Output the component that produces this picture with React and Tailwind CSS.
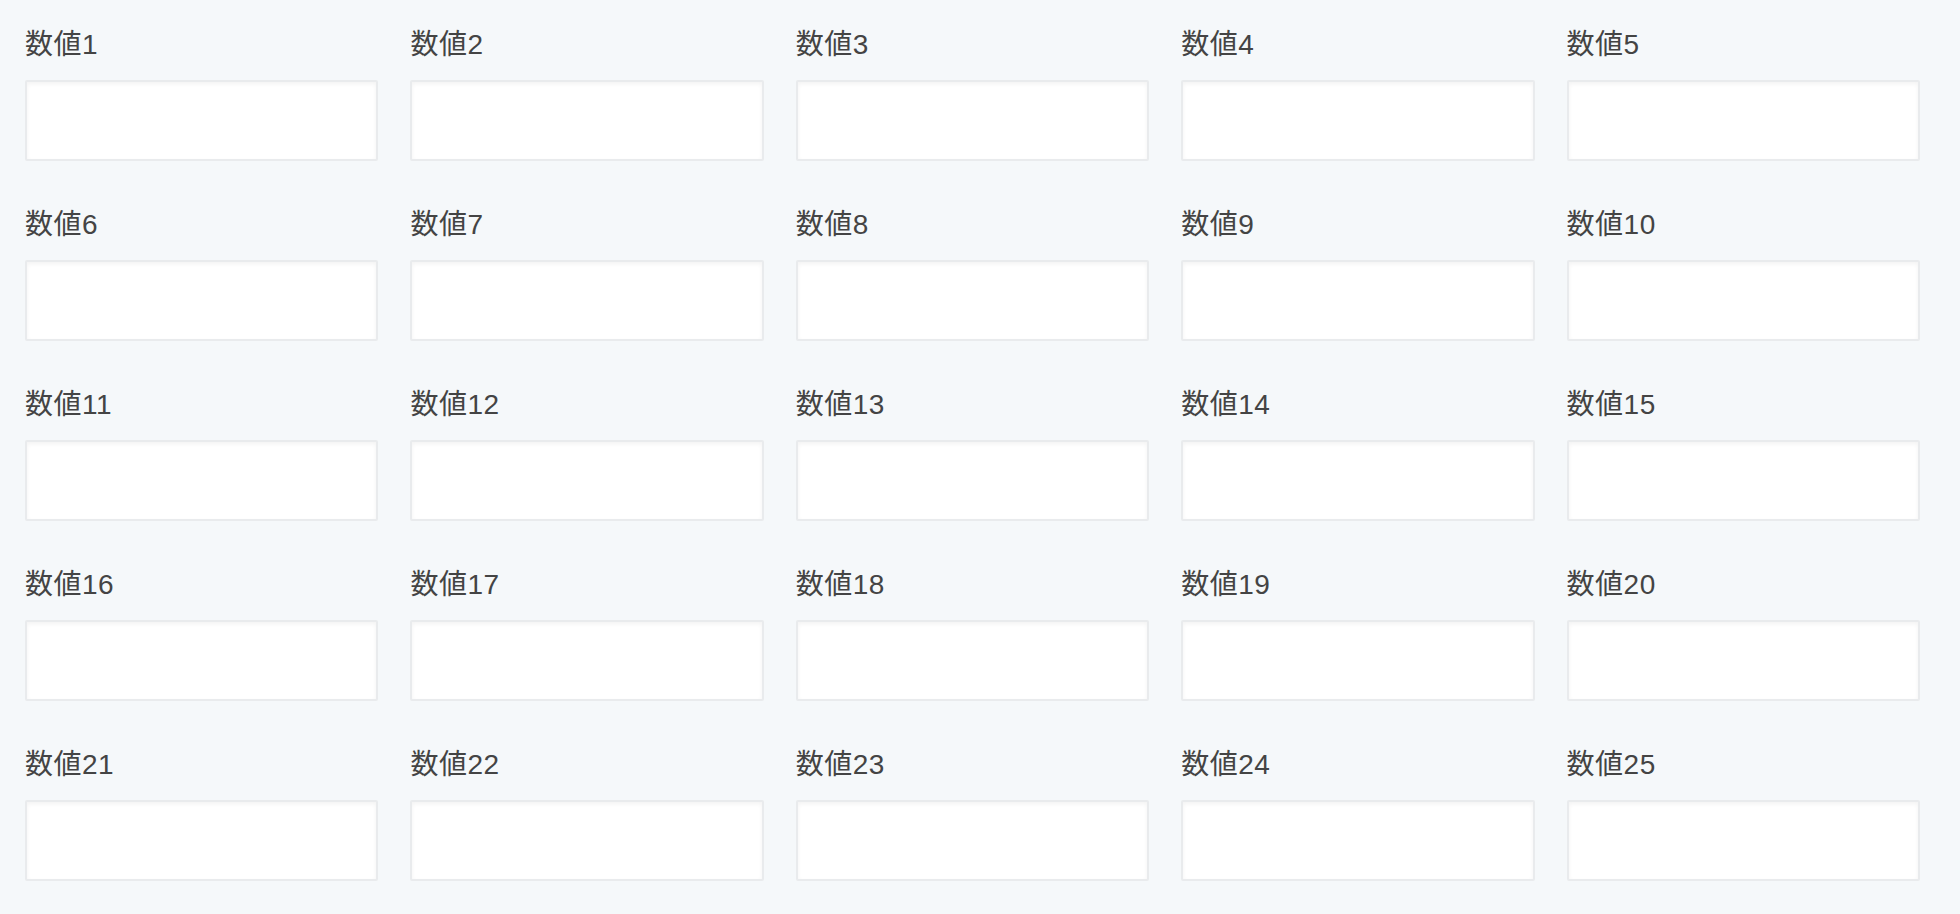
const fields = Array.from({ length: 25 }, (_, i) => ({
  id: `value${i + 1}`,
  label: `数値${i + 1}`,
}));

function NumberField({ id, label }) {
  return (
    <div className="flex flex-col">
      <label
        htmlFor={id}
        className="block h-[36px] text-[28px] leading-[36px] tracking-[0.5px] text-[#444] mt-[3px] mb-[17px]"
      >
        {label}
      </label>
      <input
        id={id}
        type="text"
        inputMode="numeric"
        className="h-[81px] w-full bg-white border-2 border-[#e9ebed] rounded-[2px] shadow-[inset_0_2px_4px_rgba(0,0,0,0.05)] outline-none px-3 text-[27px]"
      />
    </div>
  );
}

export default function App() {
  return (
    <div
      className="min-h-screen bg-[#f5f8fa] pt-[24px] pl-[25px] pr-[40px]"
      style={{ fontFamily: '"Liberation Sans", "Noto Sans CJK JP", sans-serif' }}
    >
      <div className="grid grid-cols-5 gap-x-[32px] gap-y-[43px]">
        {fields.map((f) => (
          <NumberField key={f.id} {...f} />
        ))}
      </div>
    </div>
  );
}
